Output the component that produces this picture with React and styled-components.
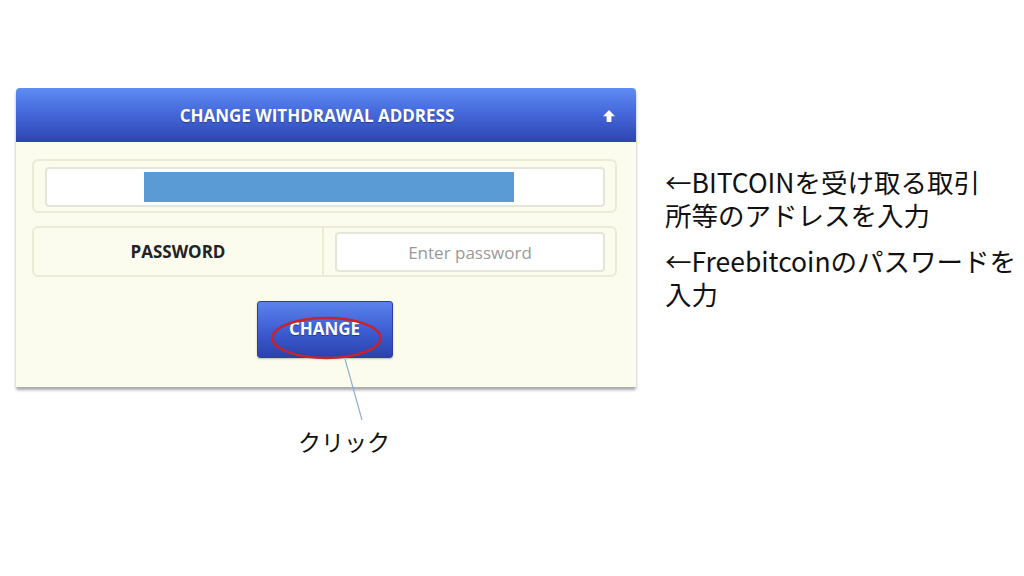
import React from 'react';
import styled, { createGlobalStyle } from 'styled-components';

const GlobalStyle = createGlobalStyle`
  html, body {
    margin : 0;
    padding : 0;
    background : #ffffff;
  }
  * {
    box-sizing : border-box;
  }
`;

const App = () => {
  return (
    <Slide>
      <GlobalStyle />
      <Panel>
        <PanelHeader>
          <HeaderTitle>CHANGE WITHDRAWAL ADDRESS</HeaderTitle>
          <ToggleIcon viewBox='0 0 14 14'>
            <path d='M7 1 L13 7.2 L9.4 7.2 L9.4 13 L4.6 13 L4.6 7.2 L1 7.2 Z' fill='#ffffff' />
          </ToggleIcon>
        </PanelHeader>
        <PanelBody>
          <FieldRow>
            <Field>
              <Highlight />
            </Field>
          </FieldRow>
          <FieldRow split>
            <LabelCell>PASSWORD</LabelCell>
            <InputCell>
              <Field as='input' type='password' placeholder='Enter password' readOnly />
            </InputCell>
          </FieldRow>
          <ButtonRow>
            <ChangeButton>CHANGE</ChangeButton>
          </ButtonRow>
        </PanelBody>
        <Callout>
          <svg width='120' height='90' viewBox='0 0 120 90'>
            <ellipse cx='42.5' cy='20' rx='54' ry='20' fill='none' stroke='#c8232b' strokeWidth='2.5' />
            <line x1='61' y1='41' x2='78' y2='102' stroke='#8fb0cf' strokeWidth='1.2' />
          </svg>
          <CalloutLabel>クリック</CalloutLabel>
        </Callout>
      </Panel>
      <Notes>
        <Note>←BITCOINを受け取る取引<br />所等のアドレスを入力</Note>
        <Note>←Freebitcoinのパスワードを<br />入力</Note>
      </Notes>
    </Slide>
  );
};

const Slide = styled.div`
  width : 1024px;
  height : 576px;
  display : flex;
  align-items : flex-start;
  gap : 29px;
  padding : 88px 0 0 16px;
  background : #ffffff;
  overflow : hidden;
`;

const Panel = styled.section`
  position : relative;
  width : 620px;
  flex-shrink : 0;
  border-radius : 4px 4px 2px 2px;
  box-shadow : 0 3px 3px rgba(60, 60, 60, 0.45);
`;

const PanelHeader = styled.div`
  height : 54px;
  position : relative;
  display : flex;
  align-items : center;
  justify-content : center;
  padding-right : 18px;
  border-radius : 4px 4px 0 0;
  background : linear-gradient(#5e8cf2 0%, #4669dc 45%, #2d44b0 100%);
`;

const HeaderTitle = styled.h2`
  margin : 0;
  color : #ffffff;
  font-family : 'Open Sans', sans-serif;
  font-weight : 700;
  font-size : 17px;
  text-shadow : 0 1px 1px rgba(0, 0, 40, 0.35);
`;

const ToggleIcon = styled.svg`
  position : absolute;
  right : 20px;
  top : 21px;
  width : 14px;
  height : 14px;
`;

const PanelBody = styled.div`
  background : #fcfcee;
  padding : 17px 19px 29px 16px;
  display : flex;
  flex-direction : column;
  gap : 13px;
`;

const FieldRow = styled.div`
  border : 2px solid #ebebd6;
  border-radius : 6px;
  display : flex;
  align-items : center;
  min-height : ${(p) => (p.split ? '51px' : '54px')};
  padding : ${(p) => (p.split ? '0' : '6px 10px 4px 11px')};
`;

const LabelCell = styled.div`
  width : 290px;
  align-self : stretch;
  display : flex;
  align-items : center;
  justify-content : center;
  border-right : 2px solid #ebebd6;
  font-family : 'Open Sans', sans-serif;
  font-weight : 700;
  font-size : 17px;
  color : #222222;
`;

const InputCell = styled.div`
  flex : 1;
  padding : 3px 10px 2px 11px;
`;

const Field = styled.div`
  width : 100%;
  height : 40px;
  display : flex;
  align-items : center;
  background : #ffffff;
  border : 2px solid #e6e6d8;
  border-radius : 4px;
  padding : 0 0 0 97px;
  font-family : 'Open Sans', sans-serif;
  font-size : 17px;
  color : #333333;
  text-align : center;
  outline : none;

  &::placeholder {
    color : #999999;
  }

  input& {
    padding : 0;
  }
`;

const Highlight = styled.div`
  width : 370px;
  height : 30px;
  background : #5b9bd5;
`;

const ButtonRow = styled.div`
  display : flex;
  justify-content : center;
  padding-top : 11px;
`;

const ChangeButton = styled.button`
  width : 136px;
  height : 57px;
  border : 1px solid #2b3f9f;
  border-radius : 3px;
  padding : 0 0 2px;
  background : linear-gradient(#5a82ec 0%, #3e5fd4 50%, #2c42ad 100%);
  color : #ffffff;
  font-family : 'Open Sans', sans-serif;
  font-weight : 700;
  font-size : 17px;
  text-shadow : 0 1px 1px rgba(0, 0, 40, 0.4);
  box-shadow : 0 1px 2px rgba(0, 0, 0, 0.25);
`;

const Callout = styled.div`
  position : absolute;
  left : 268px;
  top : 230px;
  width : 140px;
  height : 150px;
  pointer-events : none;

  svg {
    display : block;
    overflow : visible;
  }
`;

const CalloutLabel = styled.div`
  position : absolute;
  left : 14px;
  top : 106px;
  font-family : 'Noto Sans CJK JP', sans-serif;
  font-size : 23px;
  color : #111111;
  white-space : nowrap;
`;

const Notes = styled.div`
  display : flex;
  flex-direction : column;
  gap : 13px;
  padding-top : 77px;
`;

const Note = styled.p`
  margin : 0;
  font-family : 'Noto Sans CJK JP', sans-serif;
  font-size : 26.5px;
  line-height : 33px;
  color : #111111;
  white-space : nowrap;
`;

export default App;
